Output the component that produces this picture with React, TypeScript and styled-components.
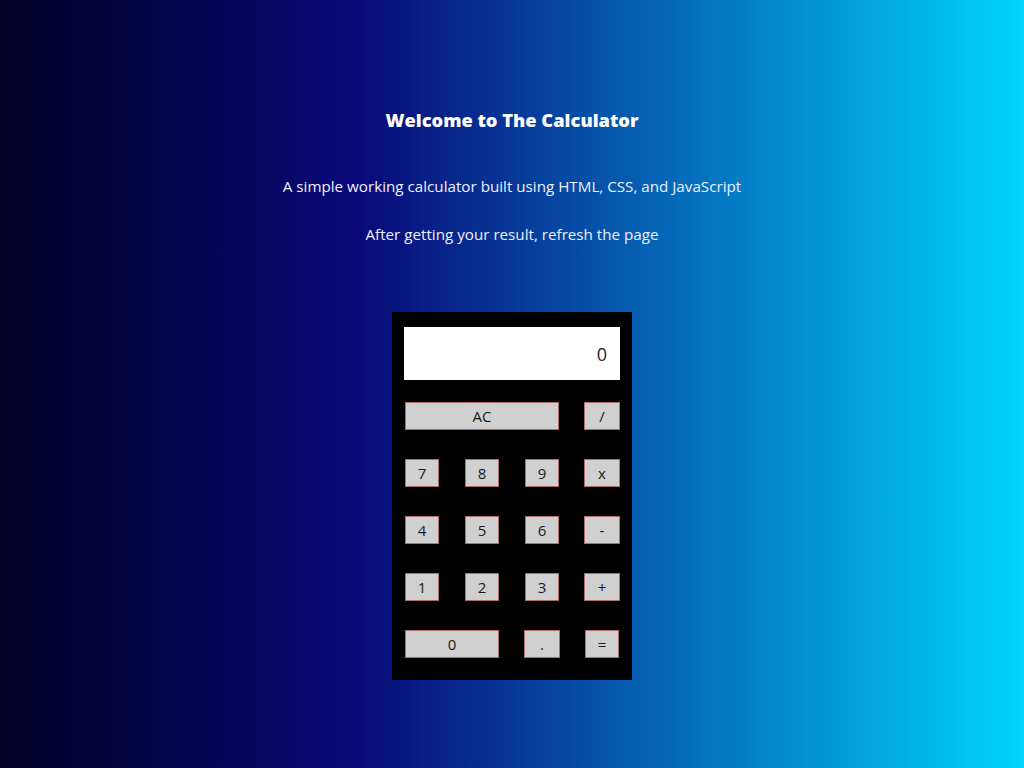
import React from "react";
import styled, { createGlobalStyle } from "styled-components";

const Global = createGlobalStyle`
  html, body { margin: 0; padding: 0; }
  body {
    min-height: 768px;
    background: linear-gradient(90deg, rgba(2,0,36,1) 0%, rgba(9,9,121,1) 35%, rgba(0,212,255,1) 100%);
    font-family: "Open Sans", "Noto Sans", sans-serif;
  }
`;

const Page = styled.main`
  display: flex;
  flex-direction: column;
  align-items: center;
  padding-top: 108px;
`;

const Title = styled.h1`
  margin: 0;
  font-size: 18.3px;
  line-height: 24px;
  font-weight: 800;
  color: #ffffff;
`;

const Text = styled.p<{ $gap: number }>`
  margin: ${(p) => p.$gap}px 0 0;
  font-size: 15.2px;
  line-height: 20px;
  color: #eef0ff;
`;

const Calc = styled.section`
  margin-top: 68px;
  width: 240px;
  background: #000;
  padding: 15px 0 22px;
  box-sizing: border-box;
`;

const Display = styled.div`
  margin: 0 12px;
  height: 53px;
  background: #fff;
  display: flex;
  align-items: center;
  justify-content: flex-end;
  padding-right: 13px;
  font-size: 18px;
  color: #222;
`;

const Keys = styled.div`
  margin-top: 22px;
  display: grid;
  grid-template-columns: repeat(4, 60px);
  grid-auto-rows: 28px;
  row-gap: 29px;
`;

const Key = styled.button<{ $w: number; $span?: number }>`
  grid-column: span ${(p) => p.$span ?? 1};
  justify-self: center;
  width: ${(p) => p.$w}px;
  height: 28px;
  box-sizing: border-box;
  background: #d0d0d0;
  border: 1px solid #b06e6e;
  padding: 0;
  font-family: "Open Sans", "Noto Sans", sans-serif;
  font-size: 15px;
  color: #1a1a1a;
  cursor: pointer;
`;

const keys: { l: string; w: number; s?: number }[] = [
  { l: "AC", w: 154, s: 3 },
  { l: "/", w: 36 },
  { l: "7", w: 34 },
  { l: "8", w: 34 },
  { l: "9", w: 34 },
  { l: "x", w: 36 },
  { l: "4", w: 34 },
  { l: "5", w: 34 },
  { l: "6", w: 34 },
  { l: "-", w: 36 },
  { l: "1", w: 34 },
  { l: "2", w: 34 },
  { l: "3", w: 34 },
  { l: "+", w: 36 },
  { l: "0", w: 94, s: 2 },
  { l: ".", w: 36 },
  { l: "=", w: 34 },
];

export default function App() {
  return (
    <>
      <Global />
      <Page>
        <Title>Welcome to The Calculator</Title>
        <Text $gap={44}>A simple working calculator built using HTML, CSS, and JavaScript</Text>
        <Text $gap={28}>After getting your result, refresh the page</Text>
        <Calc>
          <Display>0</Display>
          <Keys>
            {keys.map((k) => (
              <Key key={k.l} $w={k.w} $span={k.s}>
                {k.l}
              </Key>
            ))}
          </Keys>
        </Calc>
      </Page>
    </>
  );
}
